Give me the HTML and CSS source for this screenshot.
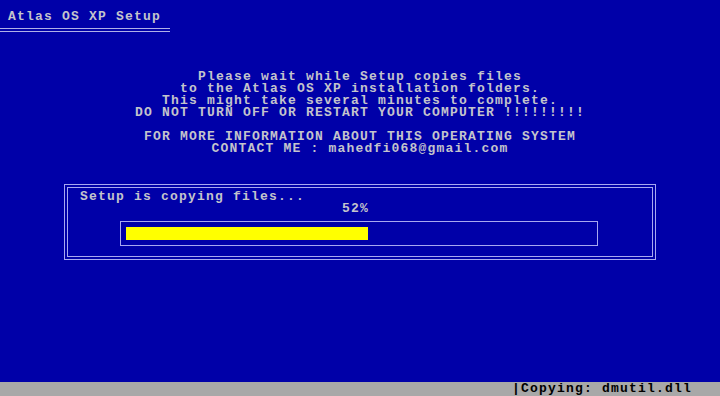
FILE: index.html
```html
<!DOCTYPE html>
<html lang="en">
<head>
    <meta charset="UTF-8">
    <meta name="viewport" content="width=device-width, initial-scale=1.0">
    <title>Atlas OS XP Setup</title>
    <link rel="stylesheet" href="styles.css">
</head>
<body>
    <div class="screen">
        <header class="title">
            <div class="title-text">Atlas OS XP Setup</div>
            <div class="title-rule"></div>
        </header>

        <div class="message">
            <div class="line">Please wait while Setup copies files</div>
            <div class="line">to the Atlas OS XP installation folders.</div>
            <div class="line">This might take several minutes to complete.</div>
            <div class="line">DO NOT TURN OFF OR RESTART YOUR COMPUTER !!!!!!!!!</div>
            <div class="spacer"></div>
            <div class="line">FOR MORE INFORMATION ABOUT THIS OPERATING SYSTEM</div>
            <div class="line">CONTACT ME : mahedfi068@gmail.com</div>
        </div>

        <div class="box">
            <div class="box-inner">
                <div class="box-label">Setup is copying files...</div>
                <div class="box-percent">52%</div>
                <div class="progress">
                    <div class="progress-fill" style="width: 52%"></div>
                </div>
            </div>
        </div>

        <div class="status">
            <div class="status-text">|Copying: dmutil.dll</div>
        </div>
    </div>
</body>
</html>
```

FILE: styles.css
```css
body {
    margin: 0;
    padding: 0;
    background-color: #0000a8;
    font-family: "Liberation Mono", "DejaVu Sans Mono", monospace;
    font-weight: bold;
    font-size: 13px;
    letter-spacing: 1.2px;
    line-height: 12px;
    color: #c4c4cc;
}

.screen {
    height: 396px;
    display: flex;
    flex-direction: column;
    overflow: hidden;
}

.title {
    padding-top: 11px;
}

.title-text {
    padding-left: 8px;
    white-space: pre;
}

.title-rule {
    width: 170px;
    height: 2px;
    margin-top: 5px;
    border-top: 1px solid #b0b0e8;
    border-bottom: 1px solid #b0b0e8;
}

.message {
    margin-top: 39px;
    text-align: center;
}

.line {
    white-space: pre;
}

.spacer {
    height: 12px;
}

.box {
    margin-top: 29px;
    margin-left: 64px;
    width: 586px;
    height: 70px;
    border: 1px solid #a8a8f0;
    padding: 2px;
}

.box-inner {
    height: 68px;
    border: 1px solid #a8a8f0;
    padding-left: 12px;
}

.box-label {
    margin-top: 3px;
    white-space: pre;
}

.box-percent {
    margin-left: 262px;
}

.progress {
    margin-top: 6px;
    margin-left: 40px;
    width: 466px;
    height: 13px;
    border: 1px solid #a8a8f0;
    padding: 5px;
}

.progress-fill {
    height: 13px;
    background-color: #ffff00;
}

.status {
    margin-top: auto;
    height: 14px;
    background-color: #a8a8a8;
    color: #000000;
}

.status-text {
    padding-left: 512px;
    padding-top: 1px;
    white-space: pre;
}
```
